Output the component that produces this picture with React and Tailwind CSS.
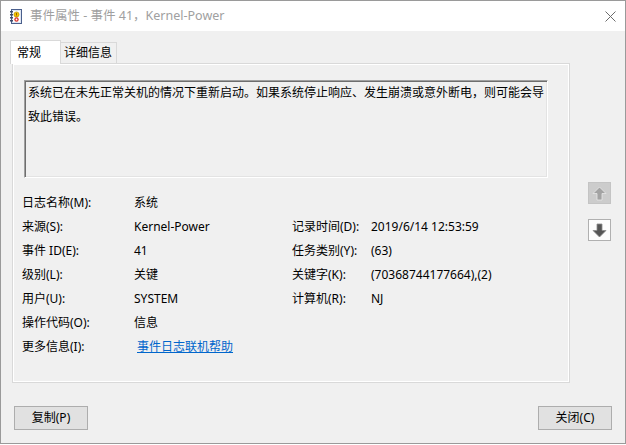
import React from 'react';

const font = { fontFamily: '"Noto Sans", "Noto Sans CJK SC", sans-serif' };

const rows = [
  { l: '日志名称(M):', v: '系统' },
  { l: '来源(S):', v: 'Kernel-Power', rl: '记录时间(D):', rv: '2019/6/14 12:53:59' },
  { l: '事件 ID(E):', v: '41', rl: '任务类别(Y):', rv: '(63)' },
  { l: '级别(L):', v: '关键', rl: '关键字(K):', rv: '(70368744177664),(2)' },
  { l: '用户(U):', v: 'SYSTEM', rl: '计算机(R):', rv: 'NJ' },
  { l: '操作代码(O):', v: '信息' },
  { l: '更多信息(I):', v: '事件日志联机帮助', link: true },
];

const LogIcon = () => (
  <svg width="14" height="17" viewBox="0 0 14 17">
    <rect x="2.5" y="1.5" width="10" height="14" fill="#dfe6f2" stroke="#4a5f8c" />
    <rect x="4" y="3" width="7" height="11" fill="#ffffff" />
    {[3, 6, 9, 12].map((y) => (
      <rect key={y} x="1" y={y} width="3" height="1.5" fill="#3b4a6b" />
    ))}
    <circle cx="7.5" cy="6.5" r="2.6" fill="#f5c400" stroke="#b08600" strokeWidth="0.6" />
    <rect x="7.1" y="5" width="0.8" height="2" fill="#7a4a00" />
    <rect x="7.1" y="7.5" width="0.8" height="0.7" fill="#7a4a00" />
    <circle cx="7.5" cy="11.5" r="2.2" fill="#d9342b" />
    <circle cx="7.5" cy="11.5" r="0.9" fill="#ffffff" />
  </svg>
);

const Arrow = ({ down, fill, hi }) => (
  <svg width="15" height="15" viewBox="0 0 15 15" className={down ? 'rotate-180' : ''}>
    <polygon points="7.5,1 14,7.5 10,7.5 10,14 5,14 5,7.5 1,7.5" fill={fill} stroke={hi} strokeWidth="0.8" />
  </svg>
);

export default function App() {
  return (
    <div className="w-[626px] h-[445px] bg-white text-[12px] text-black" style={font}>
      <div className="w-[626px] h-[444px] border border-[#9a9a9a] bg-[#f0f0f0] flex flex-col">
        {/* title bar */}
        <div className="h-[30px] bg-white flex items-center shrink-0">
          <div className="ml-[8px] w-[14px] flex items-center">
            <LogIcon />
          </div>
          <span className="ml-[7px] text-[12.5px] text-[#a0a0a0] leading-none pt-[1px]">事件属性 - 事件 41，Kernel-Power</span>
          <div className="ml-auto mr-[9px] w-[12px] h-[12px] flex items-center justify-center">
            <svg width="11" height="11" viewBox="0 0 11 11">
              <path d="M0.5 0.5 L10.5 10.5 M10.5 0.5 L0.5 10.5" stroke="#6b6b6b" strokeWidth="1" />
            </svg>
          </div>
        </div>

        {/* body */}
        <div className="flex pl-[9px] pt-[9px]">
          <div className="w-[560px] flex flex-col">
            <div className="flex h-[23px] items-start">
              <div className="relative z-10 w-[51px] h-[24px] bg-white border border-b-0 border-[#d9d9d9] flex items-center pl-[6px] leading-none">
                常规
              </div>
              <div className="mt-[2px] w-[56px] h-[21px] bg-[#f0f0f0] border border-l-0 border-b-0 border-[#d9d9d9] flex items-center pl-[3px] leading-none">
                详细信息
              </div>
            </div>
            <div className="ml-[2px] w-[558px] h-[320px] border border-[#d9d9d9] shadow-[inset_1px_1px_0_#ffffff,inset_-1px_-1px_0_#ffffff] pl-[11px] pt-[16px]">
              <div className="w-[524px] h-[98px] border border-t-[#a0a0a0] border-l-[#a0a0a0] border-r-[#ffffff] border-b-[#ffffff] shadow-[inset_1px_1px_0_#6e6e6e,inset_-1px_-1px_0_#e3e3e3] pl-[3px] pr-[2px] leading-[24px]">
                系统已在未先正常关机的情况下重新启动。如果系统停止响应、发生崩溃或意外断电，则可能会导致此错误。
              </div>
              <div className="mt-[13px] -ml-[2px] flex flex-col">
                {rows.map((r, i) => (
                  <div key={i} className="flex h-[24px] items-center">
                    <div className="w-[112px]">{r.l}</div>
                    <div className="w-[158px]">
                      {r.link ? (
                        <span className="ml-[3px] text-[#0066cc] underline">{r.v}</span>
                      ) : (
                        r.v
                      )}
                    </div>
                    {r.rl && <div className="w-[79px]">{r.rl}</div>}
                    {r.rv && <div>{r.rv}</div>}
                  </div>
                ))}
              </div>
            </div>
          </div>

          {/* nav arrows */}
          <div className="ml-[18px] mt-[142px] flex flex-col gap-[15px]">
            <div className="w-[23px] h-[22px] bg-[#cccccc] border border-[#c4c4c4] flex items-center justify-center">
              <Arrow fill="#a3a3a3" hi="#e8e8e8" />
            </div>
            <div className="w-[23px] h-[22px] bg-[#fdfdfd] border border-[#b0b0b0] flex items-center justify-center">
              <Arrow down fill="#555555" hi="#8a8a8a" />
            </div>
          </div>
        </div>

        {/* buttons */}
        <div className="flex justify-between mt-[23px] pl-[13px] pr-[13px]">
          <button className="w-[74px] h-[24px] bg-[#e1e1e1] border border-[#adadad] flex items-center justify-center leading-none">
            复制(P)
          </button>
          <button className="w-[74px] h-[24px] bg-[#e1e1e1] border border-[#adadad] flex items-center justify-center leading-none">
            关闭(C)
          </button>
        </div>
      </div>
    </div>
  );
}
